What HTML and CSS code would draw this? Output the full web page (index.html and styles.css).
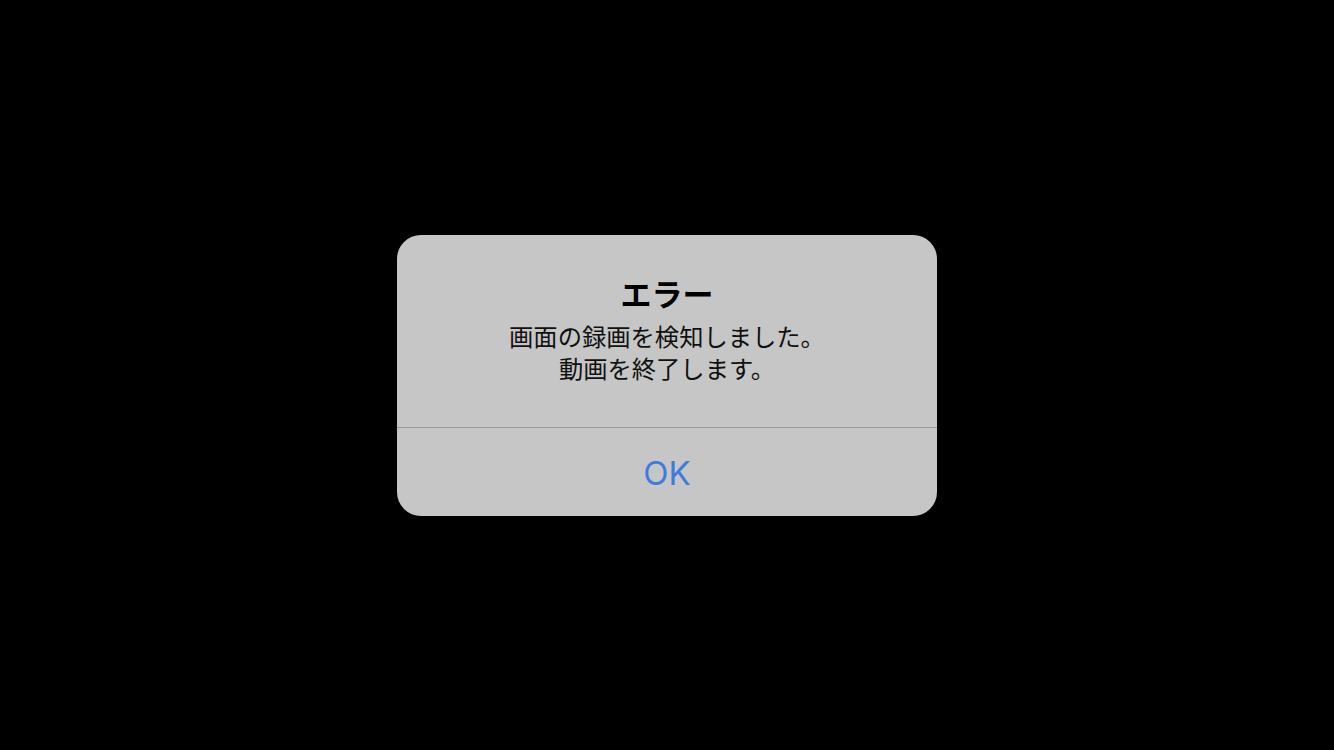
FILE: index.html
```html
<!DOCTYPE html>
<html lang="ja">
  <head>
    <meta charset="UTF-8" />
    <meta name="viewport" content="width=device-width, initial-scale=1.0" />
    <title>エラー</title>
    <link rel="stylesheet" href="styles.css">
  </head>
  <body>
    <div class="alert">
      <div class="alert-body">
        <h1 class="alert-title">エラー</h1>
        <p class="alert-message">画面の録画を検知しました。<br />動画を終了します。</p>
      </div>
      <button class="alert-button" type="button">OK</button>
    </div>
  </body>
</html>
```

FILE: styles.css
```css
* {
  margin: 0;
  padding: 0;
  box-sizing: border-box;
}

body {
  font-family: "Noto Sans CJK JP", "Noto Sans", sans-serif;
  background: #000000;
  color: #000000;
  overflow: hidden;
  min-height: 100vh;
  display: flex;
  align-items: center;
  justify-content: center;
}

.alert {
  width: 540px;
  height: 281px;
  background: #c6c6c6;
  border-radius: 24px;
  display: flex;
  flex-direction: column;
  overflow: hidden;
}

.alert-body {
  height: 193px;
  padding-top: 40px;
  text-align: center;
  border-bottom: 1px solid #9c9c9c;
}

.alert-title {
  font-size: 31px;
  font-weight: 700;
  line-height: 36px;
  margin-bottom: 9px;
}

.alert-message {
  font-size: 24.3px;
  font-weight: 400;
  line-height: 32px;
  color: #111111;
}

.alert-button {
  flex: 1;
  border: none;
  background: transparent;
  font-family: Inter, "Liberation Sans", sans-serif;
  font-size: 33px;
  font-weight: 400;
  color: #3e7bdf;
  padding-top: 2px;
}
```
